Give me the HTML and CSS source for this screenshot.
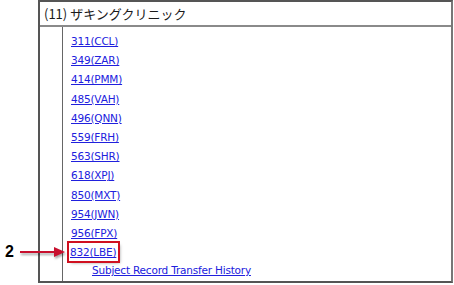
FILE: index.html
```html
<!DOCTYPE html>
<html>
<head>
<meta charset="utf-8">
<link rel="stylesheet" href="styles.css">
</head>
<body>
<div class="page">
  <div class="panel">
    <div class="panel-head">(11) ザキングクリニック</div>
    <div class="panel-body">
      <div class="gutter"></div>
      <div class="list">
        <a href="#" class="item">311(CCL)</a>
        <a href="#" class="item">349(ZAR)</a>
        <a href="#" class="item">414(PMM)</a>
        <a href="#" class="item">485(VAH)</a>
        <a href="#" class="item">496(QNN)</a>
        <a href="#" class="item">559(FRH)</a>
        <a href="#" class="item">563(SHR)</a>
        <a href="#" class="item">618(XPJ)</a>
        <a href="#" class="item">850(MXT)</a>
        <a href="#" class="item">954(JWN)</a>
        <a href="#" class="item">956(FPX)</a>
        <a href="#" class="item highlight">832(LBE)</a>
        <a href="#" class="item sub">Subject Record Transfer History</a>
      </div>
    </div>
  </div>
  <div class="callout">
    <span class="callout-num">2</span>
    <svg class="callout-arrow" width="46" height="12" viewBox="0 0 46 12">
      <line x1="0" y1="6" x2="36" y2="6" stroke="#c8102e" stroke-width="2"/>
      <polygon points="34,1 45,6 34,11" fill="#c8102e"/>
    </svg>
  </div>
</div>
</body>
</html>
```
FILE: styles.css
```css
html, body {
  margin: 0;
  padding: 0;
  background: #fff;
}
.page {
  position: relative;
  width: 454px;
  height: 285px;
  overflow: hidden;
}
.panel {
  margin-left: 38px;
  width: 411px;
  height: 279px;
  border: 2px solid #555;
  border-right-color: #777;
  background: #fff;
  display: flex;
  flex-direction: column;
}
.panel-head {
  height: 23px;
  line-height: 23px;
  border-bottom: 2px solid #8a8a8a;
  padding-left: 4px;
  font-family: "Noto Sans CJK JP", "DejaVu Sans", sans-serif;
  font-size: 13px;
  color: #1a1a1a;
}
.panel-body {
  flex: 1;
  display: flex;
}
.gutter {
  width: 22px;
  border-right: 1px solid #666;
}
.list {
  display: flex;
  flex-direction: column;
  align-items: flex-start;
  padding-top: 5px;
  padding-left: 8px;
}
.item {
  font-family: "DejaVu Sans", Verdana, sans-serif;
  font-size: 10.5px;
  line-height: 19.2px;
  color: #2020dd;
  text-decoration: underline;
  letter-spacing: -0.2px;
}
.item.sub {
  margin-left: 21px;
  line-height: 16px;
}
.highlight {
  outline: 2px solid #d01020;
  outline-offset: 0px;
  line-height: 18px;
  margin: 0 0 1px -2px;
  padding: 0 2px 0 1px;
  box-shadow: 2px 2px 3px rgba(0,0,0,0.35);
}
.callout {
  position: absolute;
  left: 5px;
  top: 243px;
  display: flex;
  align-items: center;
  gap: 6px;
}
.callout-num {
  font-family: "Liberation Sans", Arial, sans-serif;
  font-weight: bold;
  font-size: 16px;
  color: #000;
}
.callout-arrow {
  filter: drop-shadow(1px 2px 1px rgba(0,0,0,0.35));
}
```
